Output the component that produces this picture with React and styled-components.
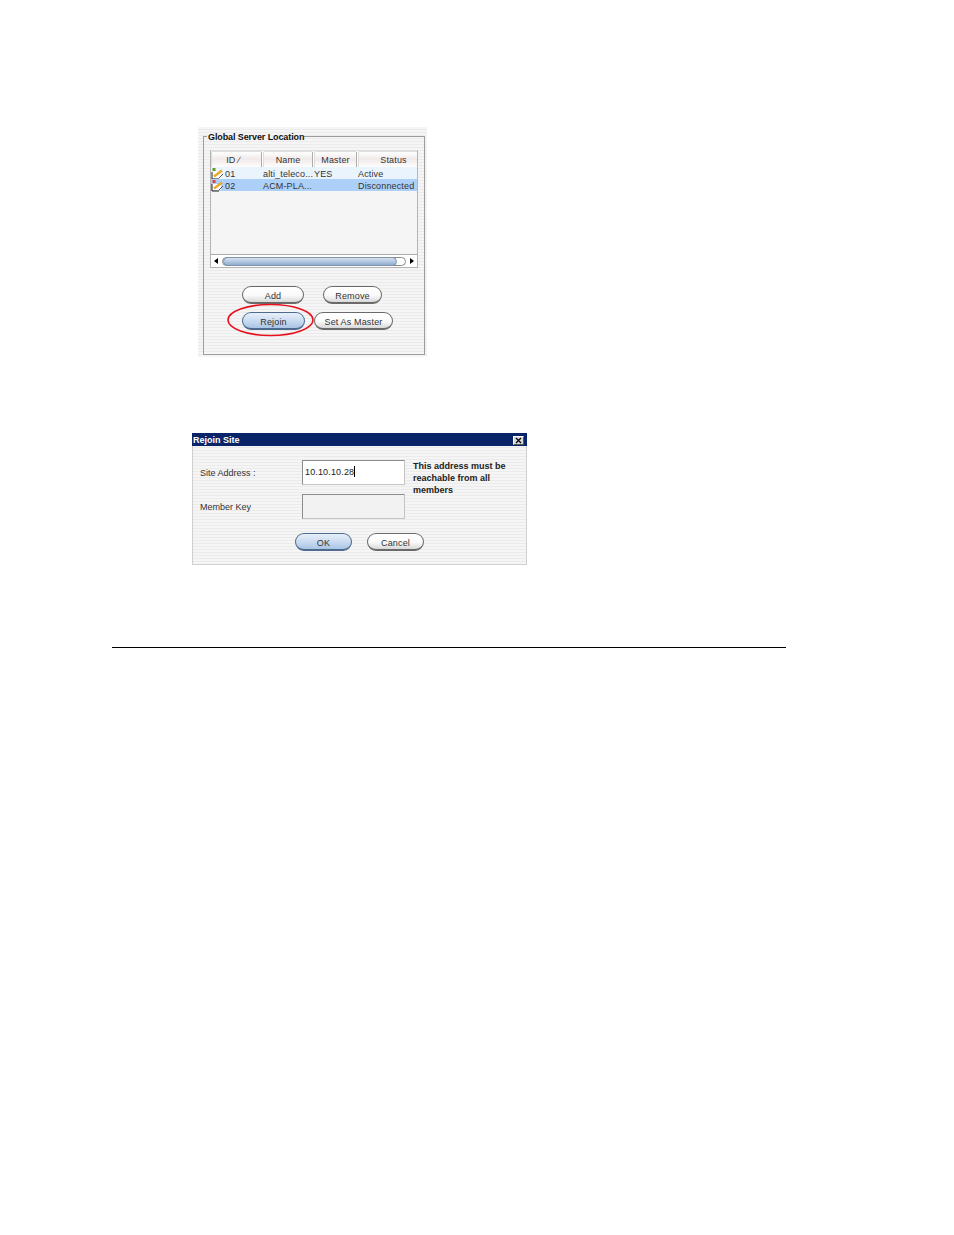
import React from "react";
import styled, { createGlobalStyle } from "styled-components";

const Global = createGlobalStyle`
  html, body { margin: 0; padding: 0; background: #fff; }
  body { font-family: "Liberation Sans", Arial, sans-serif; }
`;

const stripes = `repeating-linear-gradient(180deg, #f5f5f5 0, #f5f5f5 2px, #ebebeb 2px, #ebebeb 3px)`;

const Page = styled.div`
  width: 954px;
  height: 1235px;
  box-sizing: border-box;
  padding: 127px 0 0 112px;
  display: flex;
  flex-direction: column;
  align-items: flex-start;
`;

const Panel = styled.div`
  width: 229px;
  height: 230px;
  margin-left: 86px;
  box-sizing: border-box;
  padding: 3px 2px 3px 5px;
  background: ${stripes};
`;

const Group = styled.fieldset`
  margin: 0;
  padding: 0 6px 0 6px;
  height: 225px;
  box-sizing: border-box;
  border: 1px solid #9c9c9c;
  min-width: 0;
`;

const GroupTitle = styled.legend`
  margin-left: -3px;
  padding: 2px 0 0 1px;
  font-size: 9px;
  line-height: 11px;
  font-weight: 700;
  letter-spacing: -0.1px;
  color: #111;
`;

const Table = styled.div`
  width: 208px;
  height: 118px;
  margin-top: 7px;
  box-sizing: border-box;
  border: 1px solid #b4b4b4;
  border-top-color: #ddd;
  background: #f5f5f5;
  display: flex;
  flex-direction: column;
  overflow: hidden;
`;

const Head = styled.div`
  display: grid;
  grid-template-columns: 52px 51px 44px 72px;
  height: 16px;
  background: #fff;
`;

const HeadCell = styled.div`
  margin-right: 1px;
  padding-right: ${(p) => p.$inset || 0}px;
  border: 1px solid #ddd;
  border-right-color: #aaa;
  border-bottom-color: #aaa;
  border-radius: 2px;
  background: linear-gradient(180deg, #fff 0, #f1e9e9 45%, #fff 100%);
  font-size: 9px;
  line-height: 16px;
  letter-spacing: 0.15px;
  text-align: center;
  color: #333;
`;

const Row = styled.div`
  display: grid;
  grid-template-columns: 52px 51px 44px 59px;
  height: 12px;
  background: ${(p) => (p.$selected ? "#add0f8" : "#eaf4fd")};
`;

const Cell = styled.div`
  display: flex;
  align-items: center;
  height: 12px;
  padding-top: 1px;
  box-sizing: border-box;
  font-size: 9px;
  line-height: 12px;
  letter-spacing: 0.15px;
  color: #333;
  white-space: nowrap;
`;

const Spacer = styled.div`
  flex: 1;
`;

const ScrollBar = styled.div`
  height: 12px;
  border-top: 1px solid #aaa;
  background: #fff;
  display: flex;
  align-items: center;
`;

const Arrow = styled.div`
  width: 0;
  height: 0;
  border-top: 3px solid transparent;
  border-bottom: 3px solid transparent;
  ${(p) => (p.$right ? "border-left: 4px solid #000; margin: 0 3px 0 4px;" : "border-right: 4px solid #000; margin: 0 4px 0 3px;")}
`;

const Track = styled.div`
  flex: 1;
  height: 9px;
  position: relative;
  border: 1px solid #8a8a8a;
  border-radius: 5px;
  background: #fff;
  box-sizing: border-box;
`;

const Thumb = styled.div`
  position: absolute;
  left: 0;
  top: -1px;
  bottom: -1px;
  width: 174px;
  border: 1px solid #7f93ad;
  box-sizing: border-box;
  border-radius: 5px;
  background: linear-gradient(180deg, #d6e1ef 0, #b3c8e2 50%, #8fabcc 100%);
`;

const Buttons = styled.div`
  display: flex;
  gap: ${(p) => p.$gap}px;
  margin: ${(p) => p.$top}px 0 0 ${(p) => p.$left}px;
`;

const Pill = styled.div`
  width: ${(p) => p.$w}px;
  height: 18px;
  box-sizing: border-box;
  border: 1px solid ${(p) => (p.$active ? "#4e6b8f" : "#6a6a6a")};
  border-bottom-width: 2px;
  border-radius: 9px;
  background: ${(p) =>
    p.$active
      ? "linear-gradient(180deg, #e8f0fa 0, #c8daf0 55%, #a9c4e4 100%)"
      : "linear-gradient(180deg, #fff 0, #fafafa 55%, #d8d8d8 100%)"};
  font-size: 9px;
  line-height: 18px;
  letter-spacing: 0.15px;
  text-align: center;
  color: #333;
`;

const RejoinWrap = styled.div`
  position: relative;
`;

const Ring = styled.svg`
  position: absolute;
  left: -15px;
  top: -9px;
  pointer-events: none;
`;

const Dialog = styled.div`
  width: 335px;
  height: 132px;
  margin: 76px 0 0 80px;
  box-sizing: border-box;
  border: 1px solid #cfcfcf;
  border-top: 0;
  background: ${stripes};
`;

const TitleBar = styled.div`
  height: 13px;
  margin: 0 -1px;
  padding: 1px 3px 0 1px;
  box-sizing: border-box;
  background: #0a246a;
  display: flex;
  align-items: center;
  justify-content: space-between;
  font-size: 9px;
  font-weight: 700;
  color: #fff;
`;

const Close = styled.div`
  width: 11px;
  height: 9px;
  background: #d8d8d8;
  border: 1px solid #fff;
  border-right-color: #555;
  border-bottom-color: #555;
  box-sizing: border-box;
  display: flex;
  align-items: center;
  justify-content: center;
`;

const Form = styled.div`
  display: grid;
  grid-template-columns: 102px 103px 1fr;
  grid-template-rows: 25px 25px;
  row-gap: 9px;
  padding: 14px 0 0 7px;
  align-items: center;
`;

const Label = styled.div`
  font-size: 9px;
  color: #333;
`;

const Input = styled.div`
  height: 25px;
  box-sizing: border-box;
  border: 1px solid #8c8c8c;
  border-right-color: #c4c4c4;
  border-bottom-color: #c4c4c4;
  padding-left: 2px;
  background: ${(p) => (p.$disabled ? "#f2f2f2" : "#fff")};
  font-size: 9px;
  line-height: 23px;
  letter-spacing: 0.15px;
  color: #222;
`;

const Caret = styled.span`
  display: inline-block;
  width: 1px;
  height: 11px;
  background: #000;
  vertical-align: -2px;
`;

const Note = styled.div`
  align-self: start;
  margin: 0 0 0 8px;
  font-size: 9px;
  font-weight: 700;
  line-height: 12px;
  color: #222;
`;

const Rule = styled.div`
  width: 674px;
  height: 1px;
  margin-top: 82px;
  background: #000;
`;

const DocIcon = ({ dot }) => (
  <svg width="14" height="12" viewBox="0 0 14 12">
    <path d="M1 4 H10 V10 H1 Z" fill="#fff" />
    <path d="M1 4 V11 H8" fill="none" stroke="#222" strokeWidth="1" />
    <path d="M3 8.5 L11 2.5" stroke="#e9a82a" strokeWidth="2.4" />
    <path d="M8 10 L12 6" stroke="#555" strokeWidth="1" />
    <rect x="1.5" y="0" width="3" height="3" fill={dot} />
  </svg>
);

export default function App() {
  return (
    <Page>
      <Global />
      <Panel>
        <Group>
          <GroupTitle>Global Server Location</GroupTitle>
          <Table>
            <Head>
              <HeadCell $inset={7}>ID ∕</HeadCell>
              <HeadCell>Name</HeadCell>
              <HeadCell>Master</HeadCell>
              <HeadCell>Status</HeadCell>
            </Head>
            <Row>
              <Cell><DocIcon dot="#6a9a20" />01</Cell>
              <Cell>alti_teleco...</Cell>
              <Cell>YES</Cell>
              <Cell>Active</Cell>
            </Row>
            <Row $selected>
              <Cell><DocIcon dot="#e04040" />02</Cell>
              <Cell>ACM-PLA...</Cell>
              <Cell />
              <Cell>Disconnected</Cell>
            </Row>
            <Spacer />
            <ScrollBar>
              <Arrow />
              <Track><Thumb /></Track>
              <Arrow $right />
            </ScrollBar>
          </Table>
          <Buttons $gap={19} $top={18} $left={32}>
            <Pill $w={62}>Add</Pill>
            <Pill $w={59}>Remove</Pill>
          </Buttons>
          <Buttons $gap={9} $top={8} $left={32}>
            <RejoinWrap>
              <Pill $w={63} $active>Rejoin</Pill>
              <Ring width="88" height="34" viewBox="0 0 88 34">
                <ellipse cx="43.5" cy="17" rx="42.5" ry="15.5" fill="none" stroke="#e8101c" strokeWidth="1.6" />
              </Ring>
            </RejoinWrap>
            <Pill $w={79}>Set As Master</Pill>
          </Buttons>
        </Group>
      </Panel>
      <Dialog>
        <TitleBar>
          Rejoin Site
          <Close>
            <svg width="7" height="7" viewBox="0 0 7 7">
              <path d="M1 1 L6 6 M6 1 L1 6" stroke="#000" strokeWidth="1.2" />
            </svg>
          </Close>
        </TitleBar>
        <Form>
          <Label>Site Address :</Label>
          <Input>10.10.10.28<Caret /></Input>
          <Note>This address must be reachable from all members</Note>
          <Label>Member Key</Label>
          <Input $disabled />
        </Form>
        <Buttons $gap={15} $top={14} $left={102}>
          <Pill $w={57} $active>OK</Pill>
          <Pill $w={57}>Cancel</Pill>
        </Buttons>
      </Dialog>
      <Rule />
    </Page>
  );
}
